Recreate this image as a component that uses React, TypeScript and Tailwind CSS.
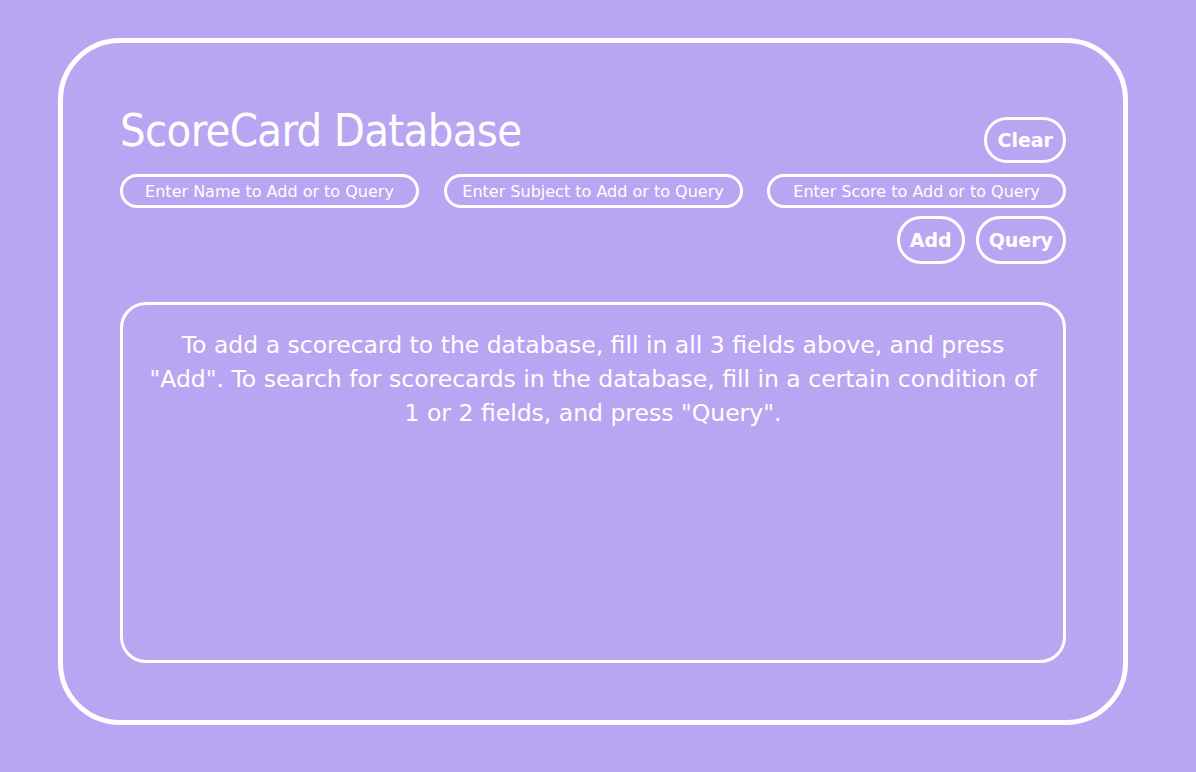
import React from "react";

const pill = "border-[3px] border-white rounded-full font-['DejaVu_Sans','Liberation_Sans',sans-serif]";
const button = `${pill} px-[10px] text-[19px] font-bold`;

export default function App() {
  return (
    <div className="w-[1196px] h-[772px] bg-[#b8a6f2] pt-[38px] pl-[58px] text-white font-['DejaVu_Sans_Condensed','DejaVu_Sans',sans-serif]">
      <div className="w-[1070px] h-[687px] border-[5px] border-white rounded-[62px] pt-[57px] px-[57px]">
        {/* Header */}
        <div className="flex justify-between items-end h-[60px]">
          <h1 className="text-[45px] leading-none tracking-[-0.7px] mb-[7px]">ScoreCard Database</h1>
          <button className={`${button} h-[46px] mb-[-3px]`}>Clear</button>
        </div>

        {/* Inputs */}
        <div className="flex justify-between mt-[14px]">
          {["Name", "Subject", "Score"].map((f) => (
            <input
              key={f}
              placeholder={`Enter ${f} to Add or to Query`}
              className={`${pill} w-[299px] h-[34px] bg-transparent text-center text-[16px] placeholder:text-white outline-none`}
            />
          ))}
        </div>

        <div className="flex justify-end gap-[11px] mt-[8px]">
          <button className={`${button} h-[48px]`}>Add</button>
          <button className={`${button} h-[48px]`}>Query</button>
        </div>

        {/* Output */}
        <div className="mt-[38px] h-[361px] border-[3px] border-white rounded-[26px] pt-[23px] px-[20px] text-center text-[23.5px] leading-[34px] font-['DejaVu_Sans','Liberation_Sans',sans-serif]">
          To add a scorecard to the database, fill in all 3 fields above, and press "Add". To search for
          scorecards in the database, fill in a certain condition of 1 or 2 fields, and press "Query".
        </div>
      </div>
    </div>
  );
}
